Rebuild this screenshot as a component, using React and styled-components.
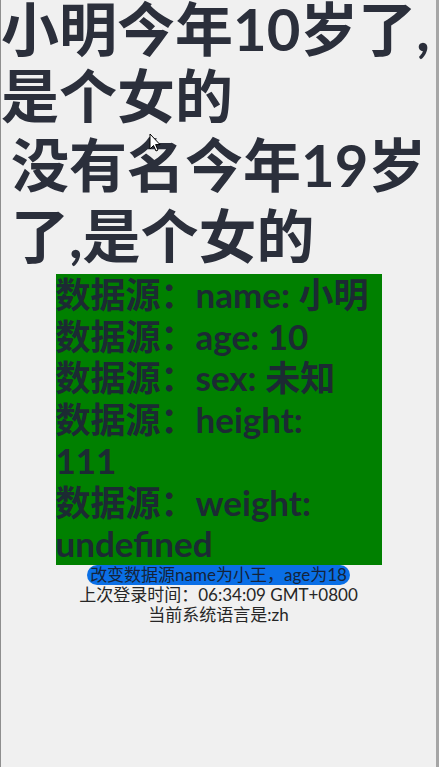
import React from "react";
import styled, { createGlobalStyle } from "styled-components";

const GlobalStyle = createGlobalStyle`
  html, body {
    margin: 0;
    padding: 0;
    background: #f0f0f0;
  }
  body {
    font-family: Lato, "Noto Sans CJK SC", sans-serif;
  }
`;

const Frame = styled.div`
  position: relative;
  box-sizing: border-box;
  height: 767px;
  overflow: hidden;
  background: #f0f0f0;
  border-left: 1px solid #8e8e8e;
  border-right: 3px solid #a6a6a6;
  display: flex;
  flex-direction: column;
`;

const Title = styled.div`
  font-size: 58px;
  font-weight: 700;
  color: #2b2f3b;
  line-height: ${(p) => p.$lh}px;
  padding-left: ${(p) => p.$indent || 0}px;
  margin-top: ${(p) => p.$top || 0}px;
`;

const Panel = styled.div`
  align-self: center;
  width: 326px;
  margin-top: 3px;
  background: #008000;
  color: #1c2a33;
  font-size: 35px;
  font-weight: 700;
  line-height: 41.5px;
`;

const Field = styled.div`
  white-space: nowrap;
`;

const Value = styled.span`
  display: ${(p) => (p.$block ? "block" : "inline")};
`;

const Lower = styled.div`
  display: flex;
  flex-direction: column;
  align-items: center;
  font-size: 17px;
  line-height: 20px;
  color: #262626;
`;

const SwitchButton = styled.button`
  width: 263px;
  height: 20px;
  padding: 0;
  border: none;
  border-radius: 10px;
  background: #0a6fe6;
  color: #14233a;
  font-family: inherit;
  font-size: 17px;
  line-height: 20px;
  white-space: nowrap;
  display: flex;
  justify-content: center;
  cursor: pointer;
`;

const Line = styled.div`
  white-space: nowrap;
`;

const Cursor = styled.svg`
  position: absolute;
  left: 148px;
  top: 133px;
`;

const person = { name: "小明", age: 10, sex: "未知", height: 111, weight: undefined };

// keys whose value drops to the next line in the panel
const wrapped = ["height", "weight"];

export default function App() {
  const keys = ["name", "age", "sex", "height", "weight"];
  return (
    <>
      <GlobalStyle />
      <Frame>
        <Title $lh={67} $top={-5}>小明今年10岁了,是个女的</Title>
        <Title $lh={71} $indent={10}>没有名今年19岁了,是个女的</Title>
        <Panel>
          {keys.map((k) => (
            <Field key={k}>
              数据源：{k}:{" "}
              <Value $block={wrapped.includes(k)}>{String(person[k])}</Value>
            </Field>
          ))}
        </Panel>
        <Lower>
          <SwitchButton>改变数据源name为小王，age为18</SwitchButton>
          <Line>上次登录时间：06:34:09 GMT+0800</Line>
          <Line>当前系统语言是:zh</Line>
        </Lower>
        <Cursor width="12" height="19" viewBox="0 0 12 19">
          <path d="M1 1 L1 16 L4.5 12.5 L7 18 L9 17 L6.6 11.6 L11 11.6 Z" fill="#fff" stroke="#000" strokeWidth="1" />
        </Cursor>
      </Frame>
    </>
  );
}
